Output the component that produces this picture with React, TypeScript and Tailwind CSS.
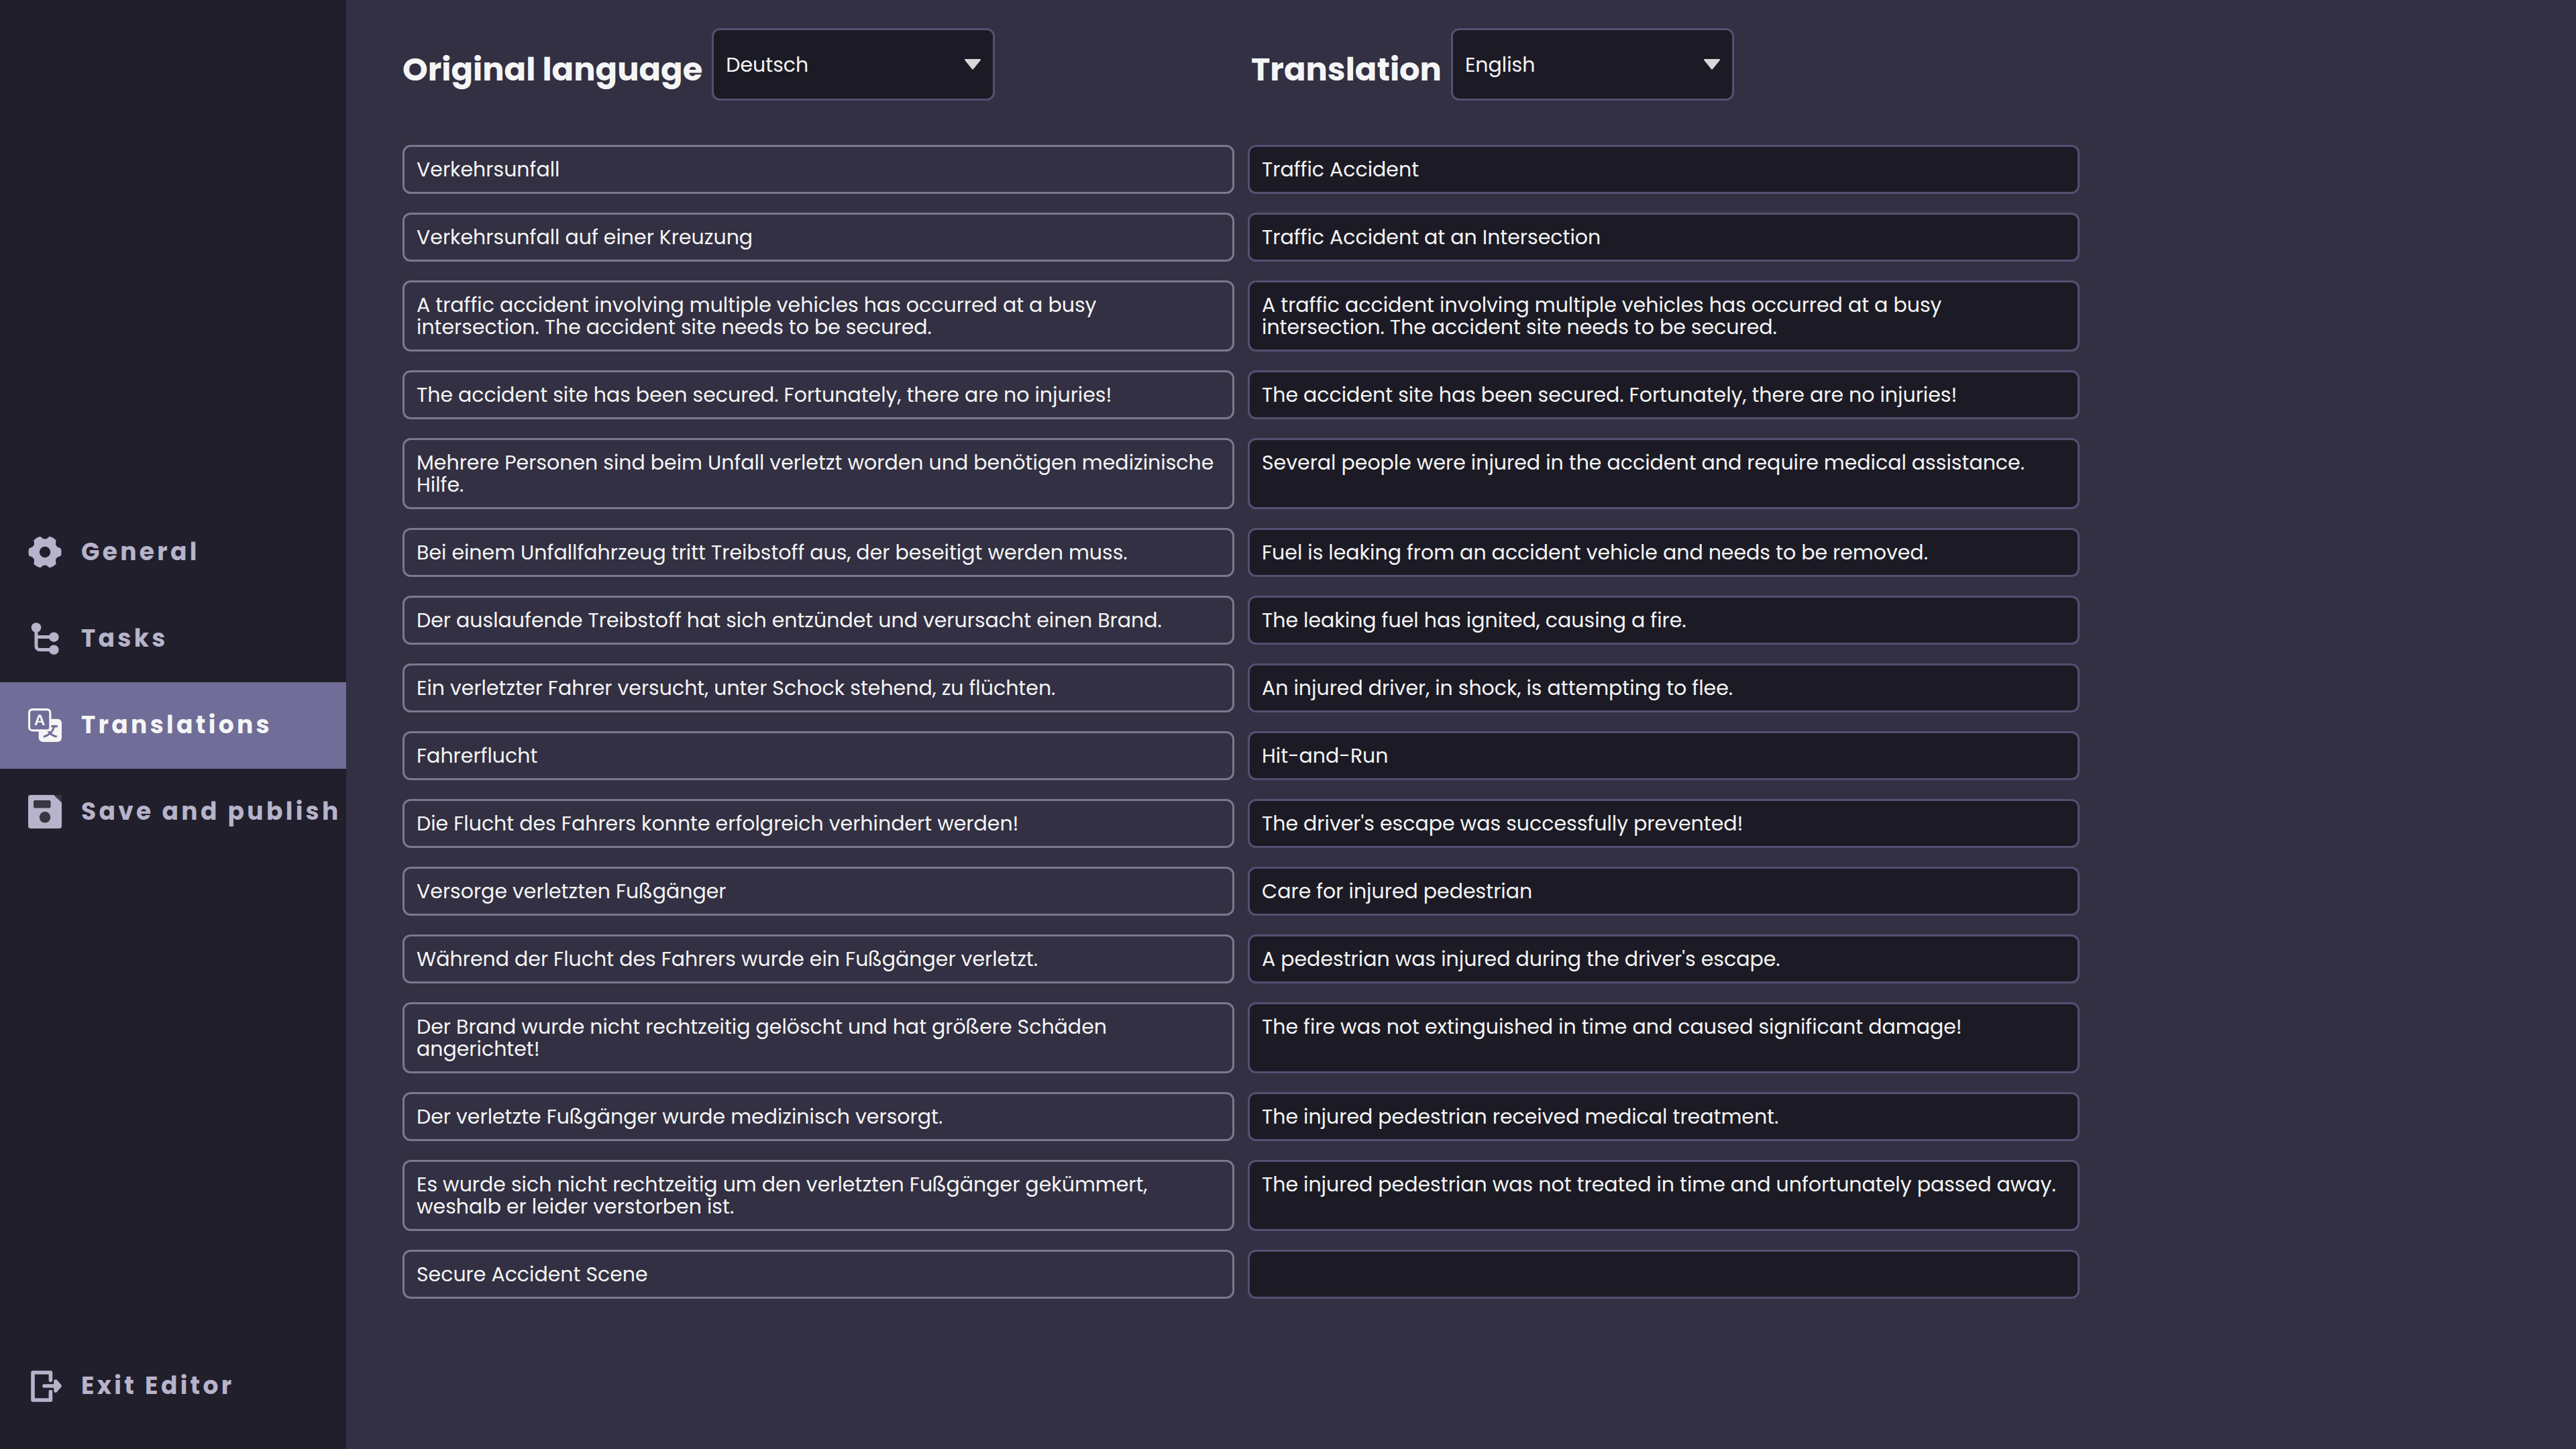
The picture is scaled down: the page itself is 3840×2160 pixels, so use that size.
import { useState } from 'react';
import type { ReactNode } from 'react';
import { BsTranslate } from 'react-icons/bs';

const initialRows = [
  { original: 'Verkehrsunfall', translation: 'Traffic Accident' },
  {
    original: 'Verkehrsunfall auf einer Kreuzung',
    translation: 'Traffic Accident at an Intersection',
  },
  {
    original:
      'A traffic accident involving multiple vehicles has occurred at a busy intersection. The accident site needs to be secured.',
    translation:
      'A traffic accident involving multiple vehicles has occurred at a busy intersection. The accident site needs to be secured.',
  },
  {
    original: 'The accident site has been secured. Fortunately, there are no injuries!',
    translation: 'The accident site has been secured. Fortunately, there are no injuries!',
  },
  {
    original:
      'Mehrere Personen sind beim Unfall verletzt worden und benötigen medizinische Hilfe.',
    translation:
      'Several people were injured in the accident and require medical assistance.',
  },
  {
    original: 'Bei einem Unfallfahrzeug tritt Treibstoff aus, der beseitigt werden muss.',
    translation: 'Fuel is leaking from an accident vehicle and needs to be removed.',
  },
  {
    original:
      'Der auslaufende Treibstoff hat sich entzündet und verursacht einen Brand.',
    translation: 'The leaking fuel has ignited, causing a fire.',
  },
  {
    original: 'Ein verletzter Fahrer versucht, unter Schock stehend, zu flüchten.',
    translation: 'An injured driver, in shock, is attempting to flee.',
  },
  { original: 'Fahrerflucht', translation: 'Hit-and-Run' },
  {
    original: 'Die Flucht des Fahrers konnte erfolgreich verhindert werden!',
    translation: "The driver's escape was successfully prevented!",
  },
  {
    original: 'Versorge verletzten Fußgänger',
    translation: 'Care for injured pedestrian',
  },
  {
    original: 'Während der Flucht des Fahrers wurde ein Fußgänger verletzt.',
    translation: "A pedestrian was injured during the driver's escape.",
  },
  {
    original:
      'Der Brand wurde nicht rechtzeitig gelöscht und hat größere Schäden angerichtet!',
    translation:
      'The fire was not extinguished in time and caused significant damage!',
  },
  {
    original: 'Der verletzte Fußgänger wurde medizinisch versorgt.',
    translation: 'The injured pedestrian received medical treatment.',
  },
  {
    original:
      'Es wurde sich nicht rechtzeitig um den verletzten Fußgänger gekümmert, weshalb er leider verstorben ist.',
    translation:
      'The injured pedestrian was not treated in time and unfortunately passed away.',
  },
  { original: 'Secure Accident Scene', translation: '' },
];

const languages = ['Deutsch', 'English'];

// Six teeth, one every 60 degrees, with a rounded valley between them
function gearPath() {
  const point = (radius: number, degrees: number) => {
    const angle = (degrees * Math.PI) / 180;
    const x = 25 + radius * Math.cos(angle);
    const y = 25 + radius * Math.sin(angle);
    return `${x.toFixed(2)} ${y.toFixed(2)}`;
  };
  let d = `M${point(23, -12)}`;
  for (let a = 0; a < 360; a += 60) {
    d += `Q${point(24, a)} ${point(23, a + 12)}`;
    d += `C${point(17, a + 22)} ${point(17, a + 38)} ${point(23, a + 48)}`;
  }
  return d + 'Z';
}

function GearIcon() {
  return (
    <svg viewBox="0 0 50 50" className="size-full" aria-hidden="true">
      <path
        d={gearPath()}
        fill="currentColor"
        stroke="currentColor"
        strokeWidth="2.6"
        strokeLinejoin="round"
      />
      <circle cx="25" cy="25" r="8.2" className="fill-[#201f2b]" />
    </svg>
  );
}

function TreeIcon() {
  return (
    <svg viewBox="0 0 50 50" className="size-full" aria-hidden="true">
      <path
        d="M12 8v29a5 5 0 0 0 5 4.5h21M12 22.5h26"
        fill="none"
        stroke="currentColor"
        strokeWidth="5"
      />
      <g fill="currentColor">
        <circle cx="12" cy="8.5" r="7.3" />
        <circle cx="38.3" cy="22.7" r="7.3" />
        <circle cx="38.3" cy="41.7" r="7.3" />
      </g>
    </svg>
  );
}

function SaveIcon() {
  return (
    <svg viewBox="0 0 50 50" className="size-full" aria-hidden="true">
      <path d="M0 0h50v50H0z" className="fill-[#373641]" />
      <path
        d="M4 0h34l12 11.5v34.5a4 4 0 0 1-4 4H4a4 4 0 0 1-4-4V4a4 4 0 0 1 4-4z"
        fill="currentColor"
      />
      <rect x="8" y="8" width="25.5" height="11.5" rx="2" className="fill-[#373641]" />
      <circle cx="25" cy="33.3" r="8.3" className="fill-[#373641]" />
    </svg>
  );
}

function ExitIcon() {
  return (
    <svg viewBox="0 0 50 50" className="size-full" aria-hidden="true">
      <g stroke="currentColor" strokeWidth="5.6" strokeLinecap="round" strokeLinejoin="round">
        <path d="M33.4 16.5V5H7v41h26.4V33.5" fill="none" />
        <path d="M24 25h20" />
        <path d="M41 18l6 7-6 7z" fill="currentColor" />
      </g>
    </svg>
  );
}

function SidebarItem({
  icon,
  label,
  active = false,
}: {
  icon: ReactNode;
  label: string;
  active?: boolean;
}) {
  return (
    <a
      href="#"
      aria-current={active ? 'page' : undefined}
      className={`flex h-[129px] items-center gap-[29px] pl-[42px] text-4xl font-bold tracking-[0.12em] whitespace-nowrap ${
        active ? 'bg-[#706d98] text-[#f5f5f5]' : 'text-[#b7b3ca]'
      }`}>
      <span className="size-[50px] shrink-0">{icon}</span>
      {label}
    </a>
  );
}

function LanguageSelect({
  id,
  label,
  defaultValue,
}: {
  id: string;
  label: string;
  defaultValue: string;
}) {
  return (
    <div className="flex items-center gap-3.5">
      <label htmlFor={id} className="pt-4 text-5xl font-bold whitespace-nowrap">
        {label}
      </label>
      <div className="relative">
        <select
          id={id}
          defaultValue={defaultValue}
          className="block h-[108px] w-[422px] appearance-none rounded-xl border-3 border-[#545072] bg-[#1c1b25] px-[18px] text-[30px]">
          {languages.map((language) => (
            <option key={language}>{language}</option>
          ))}
        </select>
        <svg
          viewBox="0 0 26 16"
          className="pointer-events-none absolute top-[46px] right-5 h-4 w-[26px] text-[#d9d9d9]"
          aria-hidden="true">
          <path
            d="M2 1h22L13 14.5z"
            fill="currentColor"
            stroke="currentColor"
            strokeWidth="2"
            strokeLinejoin="round"
          />
        </svg>
      </div>
    </div>
  );
}

export default function App() {
  const [rows, setRows] = useState(initialRows);

  const updateTranslation = (index: number, value: string) => {
    setRows(rows.map((row, i) => (i === index ? { ...row, translation: value } : row)));
  };

  return (
    <div className="flex min-h-screen bg-[#323042] font-[Poppins,'Open_Sans',sans-serif] text-[#f5f5f5]">
      <aside className="flex w-[516px] shrink-0 flex-col bg-[#201f2b] pt-8 pb-[30px]">
        <nav className="flex flex-1 flex-col justify-center">
          <SidebarItem icon={<GearIcon />} label="General" />
          <SidebarItem icon={<TreeIcon />} label="Tasks" />
          <SidebarItem icon={<BsTranslate className="size-full" />} label="Translations" active />
          <SidebarItem icon={<SaveIcon />} label="Save and publish" />
        </nav>
        <SidebarItem icon={<ExitIcon />} label="Exit Editor" />
      </aside>

      <main className="min-w-0 flex-1 px-[84px] pt-[42px] pb-10">
        <div className="max-w-[2500px]">
          <header className="mb-[66px] grid grid-cols-2 gap-[30px]">
            <LanguageSelect id="original" label="Original language" defaultValue="Deutsch" />
            <LanguageSelect id="translation" label="Translation" defaultValue="English" />
          </header>

          <div className="flex flex-col gap-7">
            {rows.map((row, index) => (
              <div key={index} className="grid grid-cols-2 gap-5">
                <textarea
                  rows={1}
                  readOnly
                  aria-label={`Original ${index + 1}`}
                  value={row.original}
                  className="block field-sizing-content w-full resize-none overflow-hidden rounded-xl border-3 border-[#7b788d] px-[18px] py-[17px] text-[30px] leading-[33px]"
                />
                <textarea
                  rows={1}
                  aria-label={`Translation ${index + 1}`}
                  value={row.translation}
                  onChange={(e) => updateTranslation(index, e.target.value)}
                  className="block field-sizing-content w-full resize-none overflow-hidden rounded-xl border-3 border-[#545072] bg-[#1c1b25] px-[18px] py-[17px] text-[30px] leading-[33px]"
                />
              </div>
            ))}
          </div>
        </div>
      </main>
    </div>
  );
}
